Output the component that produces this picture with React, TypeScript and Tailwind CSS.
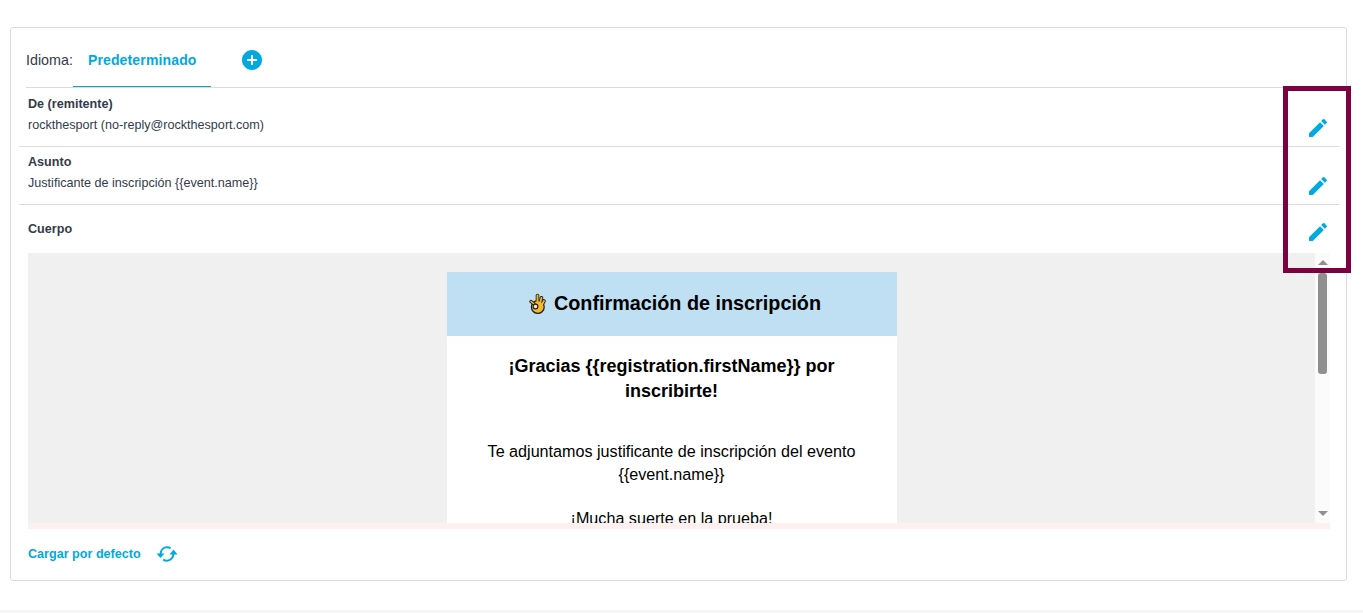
import { MdAddCircle, MdEdit } from 'react-icons/md';

const fingers = ['M8.500 10V2.500', 'M11 10.500L12.500 4.800', 'M13 11.500L15 8'];

function OkHand() {
  return (
    <svg width="17" height="21" viewBox="0 0 17 21" className="shrink-0" strokeLinecap="round">
      {fingers.map((d) => (
        <path key={d} d={d} stroke="#222" strokeWidth="3.600" fill="none" />
      ))}
      <circle cx="8.800" cy="14" r="6.400" fill="#f5b82e" stroke="#222" strokeWidth="1.300" />
      {fingers.map((d) => (
        <path key={d + 'f'} d={d} stroke="#f5b82e" strokeWidth="1.800" fill="none" />
      ))}
      <path d="M2 8.500L5 11" stroke="#222" strokeWidth="3.400" fill="none" />
      <path d="M2 8.500L5 11" stroke="#f5b82e" strokeWidth="1.600" fill="none" />
      <circle cx="6.500" cy="13.500" r="2.400" fill="#fbe7b0" stroke="#222" strokeWidth="1.200" />
    </svg>
  );
}

function SyncIcon() {
  return (
    <svg width="22" height="18" viewBox="0 0 22 18" fill="none" className="shrink-0">
      <path d="M4.500 9C4.800 5 7.500 2.200 11 2.200c1.400 0 2.600.4 3.600 1.100" stroke="#00a9e0" strokeWidth="2" />
      <path d="M17.500 8.500c-.2 4-3 7.300-6.500 7.300-1.500 0-2.800-.5-3.800-1.300" stroke="#00a9e0" strokeWidth="2" />
      <path d="M0.500 8.500h8L4.500 13z" fill="#00a9e0" />
      <path d="M13.500 9.500h8L17.500 4.500z" fill="#00a9e0" />
    </svg>
  );
}

function Field({ label, value, className }: { label: string; value: string; className: string }) {
  return (
    <div className={`border-b border-[#dcdcdc] pl-[9px] ${className}`}>
      <div className="text-[12.6px] leading-[17px] font-bold text-[#333b4d]">{label}</div>
      <div className="mt-1 text-[12.6px] leading-[17px] text-[#333b4d]">{value}</div>
    </div>
  );
}

export default function App() {
  return (
    <div className="relative h-[613px] overflow-hidden bg-white pt-[27px] font-['Liberation_Sans',Arial,sans-serif]">
      <div className="mr-[16px] ml-[10px] h-[554px] rounded-[3px] border border-[#dcdcdc] bg-white pt-[15px] pr-[7px] pl-2">
        {/* idiomas */}
        <div className="ml-[7px] flex h-[45px] items-end border-b border-[#dcdcdc]">
          <span className="pb-[17px] text-[14.3px] leading-[20px] text-[#333b4d]">Idioma:</span>
          <div className="w-[138px] border-b border-[#00a9e0] pb-4 pl-[15px] text-[14px] leading-[20px] font-bold tracking-[0.15px] text-[#00a9e0]">
            Predeterminado
          </div>
          <MdAddCircle className="mb-[15px] ml-[29px] text-[#00a9e0]" size={24} />
        </div>

        <Field
          label="De (remitente)"
          value="rockthesport (no-reply@rockthesport.com)"
          className="h-[59px] pt-2"
        />
        <Field
          label="Asunto"
          value="Justificante de inscripción {{event.name}}"
          className="h-[58px] pt-[7px]"
        />

        <div className="flex h-[48px] items-start pt-4 pl-[9px]">
          <div className="text-[12.6px] leading-[17px] font-bold text-[#333b4d]">Cuerpo</div>
        </div>

        {/* cuerpo del email */}
        <div className="mx-[9px] h-[276px] bg-[#fff0f0]">
          <div className="flex h-[270px] overflow-hidden">
            <div className="flex-1 overflow-hidden bg-[#f0f0f0] pt-[19px]">
              <div className="mx-auto h-[400px] w-[450px] bg-white text-black">
                <div className="flex h-[64px] items-center justify-center gap-2 bg-[#bfdff3] pb-px pl-[7px] text-[19.8px] font-bold">
                  <OkHand />
                  <span>Confirmación de inscripción</span>
                </div>
                <div className="px-[30px] pt-[18px] text-center">
                  <div className="text-[18px] leading-[25px] font-bold">
                    ¡Gracias {'{{registration.firstName}}'} por inscribirte!
                  </div>
                  <div className="mt-[36px] text-[16.15px] leading-[23px]">
                    Te adjuntamos justificante de inscripción del evento {'{{event.name}}'}
                  </div>
                  <div className="mt-[21px] text-[16.15px] leading-[23px]">¡Mucha suerte en la prueba!</div>
                </div>
              </div>
            </div>
            {/* scrollbar */}
            <div className="flex w-[15px] flex-col items-center bg-[#fbfbfb] pt-[7px]">
              <div className="h-0 w-0 border-x-[5px] border-b-[5px] border-x-transparent border-b-[#8f8f8f]" />
              <div className="mt-2 h-[101px] w-[9px] rounded-[3px] bg-[#8f8f8f]" />
              <div className="mt-[137px] h-0 w-0 border-x-[5px] border-t-[5px] border-x-transparent border-t-[#8f8f8f]" />
            </div>
          </div>
        </div>

        <div className="mt-[15px] ml-[9px] flex items-center gap-[15px]">
          <span className="text-[12.6px] leading-[20px] font-bold text-[#00a9e0]">Cargar por defecto</span>
          <SyncIcon />
        </div>
      </div>

      {/* marco de resaltado sobre los lapices */}
      <div className="absolute top-[86px] left-[1283px] h-[187px] w-[68px] border-[5px] border-[#7f0040]">
        <MdEdit className="absolute top-[25px] left-[18px] text-[#00a9e0]" size={24} />
        <MdEdit className="absolute top-[83px] left-[18px] text-[#00a9e0]" size={24} />
        <MdEdit className="absolute top-[129px] left-[18px] text-[#00a9e0]" size={24} />
      </div>

      <div className="absolute right-0 bottom-0 left-0 h-[3px] bg-[#f5f5f5]" />
    </div>
  );
}
